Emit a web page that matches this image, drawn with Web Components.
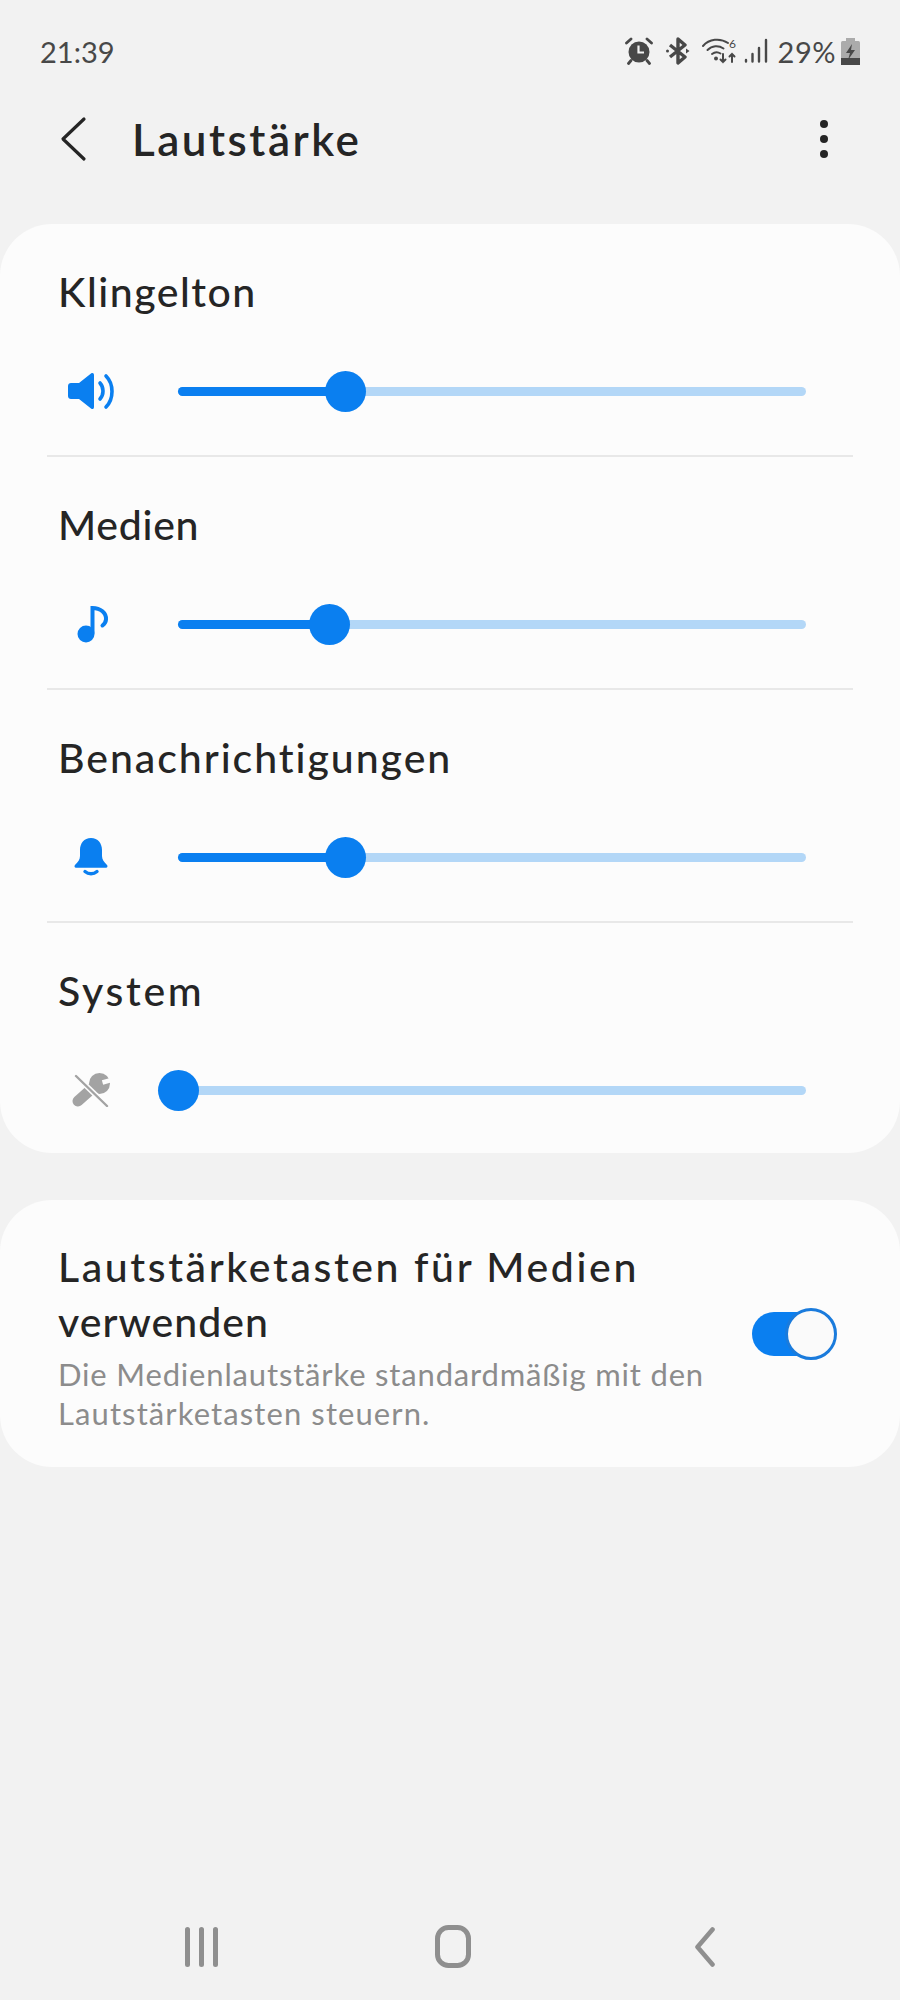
<!DOCTYPE html>
<html lang="de">
<head>
<meta charset="utf-8">
<title>Lautstärke</title>
<style>
  html, body { margin: 0; padding: 0; background: #f2f2f2; }
  body { font-family: "Lato", "Open Sans", sans-serif; color: #252525; }
  #page { display: flex; flex-direction: column; height: 2000px; overflow: hidden; }
  .line { display: block; white-space: nowrap; }
</style>
</head>
<body>
<div id="page">
  <status-bar time="21:39" battery="29%"></status-bar>
  <app-header title="Lautstärke"></app-header>
  <settings-card style="margin-top:50px">
    <volume-row label="Klingelton" value="26.700" spacing="1.5" divider>
      <svg slot="icon" width="48" height="38" viewBox="0 0 48 38"><path fill="#0a7ff0" d="M3 11h8L23 1.500c1.600-1 3-.4 3 1.500v32c0 1.900-1.400 2.600-3 1.500L11 27H3c-1.700 0-3-1.300-3-3V14c0-1.700 1.300-3 3-3z"/><path fill="none" stroke="#0a7ff0" stroke-width="3.600" stroke-linecap="round" d="M32 11c4 4.500 4 11.500 0 16M38 4c8 8 8 23 0 31"/></svg>
    </volume-row>
    <volume-row label="Medien" value="24.200" spacing="0.7" divider>
      <svg slot="icon" width="36" height="38" viewBox="0 0 36 38" style="margin-left:9px"><circle cx="9" cy="29" r="8.500" fill="#0a7ff0"/><path fill="none" stroke="#0a7ff0" stroke-width="4" stroke-linecap="round" d="M15.500 28V3c8 0 14 5 13.500 11.500-.2 2.500-1.500 4.500-3.500 6"/></svg>
    </volume-row>
    <volume-row label="Benachrichtigungen" value="26.700" spacing="1.95" divider>
      <svg slot="icon" width="36" height="38" viewBox="0 0 36 38" style="margin-left:5px"><path fill="#0a7ff0" d="M18 0c7 0 11 5.500 11 12v6c0 3.500 2 6 5 9 .9 1 .6 2.800-1 2.800H3c-1.600 0-1.900-1.800-1-2.800 3-3 5-5.500 5-9v-6C7 5.500 11 0 18 0z"/><path fill="none" stroke="#0a7ff0" stroke-width="3.400" stroke-linecap="round" d="M12 33.500c3.500 3 8.500 3 12 0"/></svg>
    </volume-row>
    <volume-row label="System" value="0" spacing="2.7">
      <svg slot="icon" width="38" height="34" viewBox="0 0 38 34" style="margin-left:4px"><path fill="none" stroke="#a3a3a3" stroke-width="11" stroke-linecap="round" d="M6 28L24 12"/><circle cx="27.500" cy="10.500" r="10.500" fill="#a3a3a3"/><path fill="none" stroke="#fcfcfc" stroke-width="4.500" d="M30.500 9.500L39 7"/><path fill="none" stroke="#fcfcfc" stroke-width="5.500" d="M1 0l35 34"/><path fill="none" stroke="#a3a3a3" stroke-width="2.400" stroke-linecap="round" d="M4 3l31 30"/></svg>
    </volume-row>
  </settings-card>
  <settings-card style="margin-top:47px">
    <toggle-row>
      <span class="line" style="letter-spacing:2.6px">Lautstärketasten für Medien</span>
      <span class="line" style="letter-spacing:1px">verwenden</span>
      <span slot="sub" class="line" style="letter-spacing:0.83px">Die Medienlautstärke standardmäßig mit den</span>
      <span slot="sub" class="line" style="letter-spacing:1.1px">Lautstärketasten steuern.</span>
    </toggle-row>
  </settings-card>
  <nav-bar></nav-bar>
</div>

<script>
  class StatusBar extends HTMLElement {
    constructor() {
      super();
      this.attachShadow({ mode: "open" });
      this.shadowRoot.innerHTML = `
        <style>
          :host { display: flex; align-items: center; height: 52px; margin-top: 25px; padding: 0 40px; color: #484848; font-size: 29px; flex: none; }
          .right { margin-left: auto; display: flex; align-items: center; }
          svg { display: block; flex: none; }
          .pct { margin: 0 5px 0 10px; letter-spacing: 0.5px; }
        </style>
        <span class="time">${this.getAttribute("time")}</span>
        <div class="right">
          <svg width="28" height="28" viewBox="0 0 28 28" style="margin-right:13px"><circle cx="14" cy="15" r="10.500" fill="#484848"/><path fill="none" stroke="#f2f2f2" stroke-width="2.200" d="M13.500 8.500v7h5.500"/><path fill="none" stroke="#484848" stroke-width="2.800" stroke-linecap="round" d="M1.500 6L6 2M26.500 6L22 2M6 23.500l-2.500 3M22 23.500l2.500 3"/></svg>
          <svg width="24" height="28" viewBox="0 0 24 28" style="margin-right:12px"><path fill="none" stroke="#484848" stroke-width="3.400" stroke-linejoin="round" d="M4 8l15 12-7 6V2l7 6L4 20"/><circle cx="1.500" cy="14" r="1.500" fill="#484848"/><path fill="#484848" d="M20 11.500l3.500 2.500-3.500 2.500z"/></svg>
          <svg width="36" height="28" viewBox="0 0 36 28" style="margin-right:6px"><g fill="none" stroke="#484848" stroke-width="2" stroke-linecap="round"><path d="M1 9C7 2 18 .5 26 6"/><path d="M5.500 13c4.500-4.500 11-5 16-1.500"/><path d="M10 17c2.500-2 6-2.200 8.500-.5"/><path d="M21 17v8M18.500 22.500L21 25l2.500-2.500M30 25v-8M27.500 19.500L30 17l2.500 2.500"/></g><circle cx="14" cy="21.500" r="2" fill="#484848"/><text x="27" y="11" font-size="12" fill="#484848" font-family="Lato, sans-serif">6</text></svg>
          <svg width="24" height="26" viewBox="0 0 24 26"><g stroke="#484848" stroke-width="2.400" stroke-linecap="round"><path d="M2 22v1.500M8.500 16v7.500M15 10v13.500M22 2v21.500"/></g></svg>
          <span class="pct">${this.getAttribute("battery")}</span>
          <svg width="19" height="27" viewBox="0 0 19 27"><rect x="5" y="0" width="9" height="3" fill="#ababab"/><rect x="0" y="3" width="19" height="24" rx="1.500" fill="#ababab"/><rect x="0" y="20" width="19" height="7" fill="#484848"/><path fill="#484848" d="M11 6L5 15h4l-2 7 7-10h-4z"/></svg>
        </div>
      `;
    }
  }

  class AppHeader extends HTMLElement {
    constructor() {
      super();
      this.attachShadow({ mode: "open" });
      this.shadowRoot.innerHTML = `
        <style>
          :host { display: flex; align-items: center; height: 70px; margin-top: 27px; padding: 0 71px 0 60px; flex: none; }
          h1 { margin: 0 0 0 45px; font-size: 44px; font-weight: 600; letter-spacing: 2.5px; color: #252525; }
          svg { display: block; flex: none; }
          .more { margin-left: auto; }
        </style>
        <svg width="27" height="46" viewBox="0 0 27 46"><path fill="none" stroke="#252525" stroke-width="3.200" stroke-linecap="round" stroke-linejoin="round" d="M24 3L3 23l21 20"/></svg>
        <h1>${this.getAttribute("title")}</h1>
        <svg class="more" width="10" height="40" viewBox="0 0 10 40"><g fill="#252525"><circle cx="5" cy="5" r="4"/><circle cx="5" cy="20" r="4"/><circle cx="5" cy="35" r="4"/></g></svg>
      `;
    }
  }

  class SettingsCard extends HTMLElement {
    constructor() {
      super();
      this.attachShadow({ mode: "open" });
      this.shadowRoot.innerHTML = `
        <style>
          :host { display: block; background: #fcfcfc; border-radius: 52px; flex: none; }
        </style>
        <slot></slot>
      `;
    }
  }

  class VolumeSlider extends HTMLElement {
    constructor() {
      super();
      this.attachShadow({ mode: "open" });
      const value = this.getAttribute("value") || 0;
      this.shadowRoot.innerHTML = `
        <style>
          :host { display: block; position: relative; height: 9px; border-radius: 5px; background: #b3d7f7; flex: 1; }
          .fill { height: 100%; width: ${value}%; border-radius: 5px; background: #0a7ff0; }
          .thumb { position: absolute; left: ${value}%; top: 50%; width: 41px; height: 41px; margin: -20.500px 0 0 -20.500px; border-radius: 50%; background: #0a7ff0; }
        </style>
        <div class="fill"></div>
        <div class="thumb"></div>
      `;
    }
  }

  class VolumeRow extends HTMLElement {
    constructor() {
      super();
      this.attachShadow({ mode: "open" });
      const spacing = this.getAttribute("spacing") || 0;
      this.shadowRoot.innerHTML = `
        <style>
          :host { display: block; height: 233px; box-sizing: border-box; padding-top: 42px; }
          :host([divider]) { border-bottom: 0; }
          :host(:not([divider])) { height: 230px; }
          .label { margin-left: 58px; font-size: 41px; line-height: 52px; letter-spacing: ${spacing}px; font-weight: 500; }
          .ctrl { display: flex; align-items: center; height: 48px; margin-top: 49px; padding: 0 94px 0 68px; }
          .icon { width: 110px; flex: none; display: flex; align-items: center; }
          hr { margin: 40px 47px 0; border: 0; height: 2px; background: #e8e8e8; }
        </style>
        <div class="label">${this.getAttribute("label")}</div>
        <div class="ctrl">
          <div class="icon"><slot name="icon"></slot></div>
          <volume-slider value="${this.getAttribute("value")}"></volume-slider>
        </div>
        ${this.hasAttribute("divider") ? "<hr>" : ""}
      `;
    }
  }

  class ToggleRow extends HTMLElement {
    constructor() {
      super();
      this.attachShadow({ mode: "open" });
      this.shadowRoot.innerHTML = `
        <style>
          :host { display: flex; align-items: center; height: 267px; box-sizing: border-box; padding: 0 64px 0 58px; }
          .text { flex: 1; min-width: 0; padding-top: 4px; }
          .title { font-size: 41px; line-height: 55px; font-weight: 500; }
          .sub { font-size: 31px; line-height: 39px; color: #8c8c8c; margin-top: 6px; }
          .switch { position: relative; width: 84px; height: 44px; flex: none; border-radius: 22px; background: #0a7ff0; margin-left: auto; }
          .knob { position: absolute; right: -1px; top: -4px; width: 52px; height: 52px; box-sizing: border-box; border-radius: 50%; background: #fafafa; border: 3px solid #1a7bdc; }
        </style>
        <div class="text">
          <div class="title"><slot></slot></div>
          <div class="sub"><slot name="sub"></slot></div>
        </div>
        <div class="switch"><div class="knob"></div></div>
      `;
    }
  }

  class NavBar extends HTMLElement {
    constructor() {
      super();
      this.attachShadow({ mode: "open" });
      this.shadowRoot.innerHTML = `
        <style>
          :host { display: flex; align-items: center; margin-top: auto; height: 43px; padding: 0 0 32px 185px; flex: none; }
          svg { display: block; flex: none; }
        </style>
        <svg width="33" height="40" viewBox="0 0 33 40"><g stroke="#8f8f8f" stroke-width="5" stroke-linecap="round"><path d="M2.500 2.500v35M16.500 2.500v35M30.500 2.500v35"/></g></svg>
        <svg width="36" height="43" viewBox="0 0 36 43" style="margin-left:217px"><rect x="2.500" y="2.500" width="31" height="38" rx="11" fill="none" stroke="#8f8f8f" stroke-width="5"/></svg>
        <svg width="20" height="40" viewBox="0 0 20 40" style="margin-left:224px"><path fill="none" stroke="#8f8f8f" stroke-width="4.600" stroke-linecap="round" stroke-linejoin="round" d="M17.500 2.500L2.500 20l15 17.500"/></svg>
      `;
    }
  }

  customElements.define("status-bar", StatusBar);
  customElements.define("app-header", AppHeader);
  customElements.define("settings-card", SettingsCard);
  customElements.define("volume-slider", VolumeSlider);
  customElements.define("volume-row", VolumeRow);
  customElements.define("toggle-row", ToggleRow);
  customElements.define("nav-bar", NavBar);
</script>
</body>
</html>
